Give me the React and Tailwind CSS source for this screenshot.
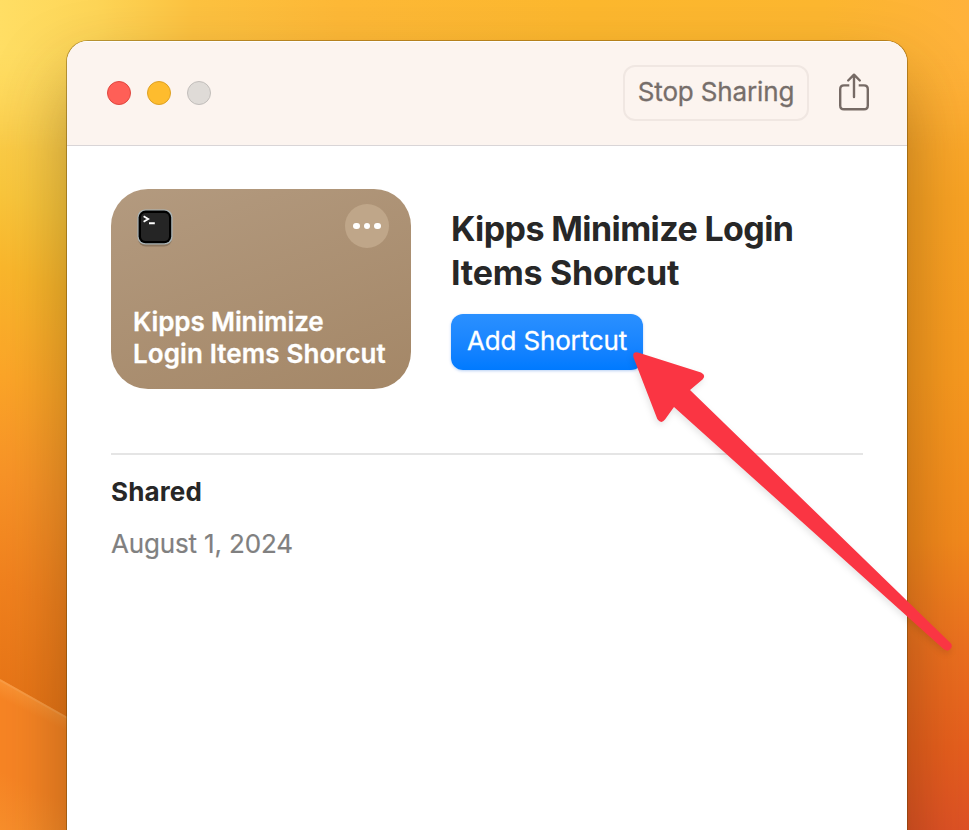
function Wallpaper() {
  return (
    <svg className="col-start-1 row-start-1 h-[830px] w-[969px]" viewBox="0 0 969 830" aria-hidden="true">
      <defs>
        <linearGradient id="left" x1="0" y1="0" x2="-286" y2="715" gradientUnits="userSpaceOnUse">
          <stop offset="0" stopColor="#ffde64" />
          <stop offset="0.12" stopColor="#fdd150" />
          <stop offset="0.23" stopColor="#fac73c" />
          <stop offset="0.32" stopColor="#fbb82c" />
          <stop offset="0.45" stopColor="#fda628" />
          <stop offset="0.57" stopColor="#f99427" />
          <stop offset="0.7" stopColor="#f2821e" />
          <stop offset="0.83" stopColor="#e97617" />
          <stop offset="1" stopColor="#e97617" />
        </linearGradient>
        <linearGradient id="right" x1="0" y1="0" x2="0" y2="1">
          <stop offset="0" stopColor="#ffb639" />
          <stop offset="0.1" stopColor="#feae31" />
          <stop offset="0.24" stopColor="#f9a324" />
          <stop offset="0.45" stopColor="#f89a1f" />
          <stop offset="0.65" stopColor="#f48a1c" />
          <stop offset="0.78" stopColor="#ec701f" />
          <stop offset="0.9" stopColor="#e75f1d" />
          <stop offset="1" stopColor="#df5225" />
        </linearGradient>
        <linearGradient id="top" x1="0" y1="0" x2="969" y2="0" gradientUnits="userSpaceOnUse">
          <stop offset="0" stopColor="#ffde64" />
          <stop offset="0.1" stopColor="#fed557" />
          <stop offset="0.16" stopColor="#fdca49" />
          <stop offset="0.2" stopColor="#fdc240" />
          <stop offset="0.35" stopColor="#feb937" />
          <stop offset="0.6" stopColor="#fdb82e" />
          <stop offset="0.85" stopColor="#fdb730" />
          <stop offset="1" stopColor="#ffb23b" />
        </linearGradient>
        <linearGradient id="fade" x1="0" y1="0" x2="0" y2="150" gradientUnits="userSpaceOnUse">
          <stop offset="0" stopColor="#fff" />
          <stop offset="0.3" stopColor="#fff" />
          <stop offset="1" stopColor="#000" />
        </linearGradient>
        <mask id="topMask">
          <rect width="969" height="150" fill="url(#fade)" />
        </mask>
        <linearGradient id="fold" x1="0" y1="680" x2="-60" y2="800" gradientUnits="userSpaceOnUse">
          <stop offset="0" stopColor="#fb9434" />
          <stop offset="0.12" stopColor="#f88524" />
          <stop offset="0.6" stopColor="#f88524" />
          <stop offset="1" stopColor="#f98f2b" />
        </linearGradient>
      </defs>
      <rect width="485" height="830" fill="url(#left)" />
      <rect x="484" width="485" height="830" fill="url(#right)" />
      <rect width="969" height="150" fill="url(#top)" mask="url(#topMask)" />
      <path d="M0 679 L110 741 V830 H0 Z" fill="url(#fold)" />
      <path d="M0 680 L110 742" stroke="#fba04b" strokeWidth="2" opacity="0.7" />
    </svg>
  );
}

function ShareIcon() {
  return (
    <svg className="mb-0.5 ml-[28px] h-[40px] w-[33px]" viewBox="0 0 33 40" fill="none" stroke="#766a65" strokeWidth="2.4" strokeLinecap="round" strokeLinejoin="round" aria-label="Share">
      <path strokeLinecap="butt" d="M12.3 13.4 H7 Q3.2 13.4 3.2 17.2 V33.4 Q3.2 37.2 7 37.2 H27 Q30.8 37.2 30.8 33.4 V17.2 Q30.8 13.4 27 13.4 H21.7" />
      <path d="M17 25 V3.2 M11.2 8.5 L17 2.7 L22.8 8.5" />
    </svg>
  );
}

function TitleBar() {
  return (
    <header className="flex h-[105px] items-center border-b border-[#d9d5d7] bg-[#fcf4ef] pr-[37px] pl-10 shadow-[inset_0_1px_0_#ffffff]">
      <div className="flex gap-4">
        <span className="size-6 rounded-full border border-[#e0473f] bg-[#ff5f57]" />
        <span className="size-6 rounded-full border border-[#dea123] bg-[#febc2e]" />
        <span className="size-6 rounded-full border border-[#c2bebb] bg-[#dfdbd7]" />
      </div>
      <button className="ml-auto flex h-14 w-[186px] items-center justify-center rounded-xl border-2 border-[#f0e7e2] pb-1 text-[26px] tracking-[-0.15px] whitespace-nowrap text-[#766e6a] [-webkit-text-stroke:0.3px_#766e6a]">
        Stop Sharing
      </button>
      <ShareIcon />
    </header>
  );
}

function TerminalIcon() {
  return (
    <svg className="mt-[3px] h-[40px] w-[38px] overflow-visible" viewBox="0 0 38 40" aria-hidden="true">
      <rect x="2" y="4" width="34" height="34.5" rx="8" fill="#5b4936" opacity="0.4" />
      <rect x="1.4" y="1.4" width="35.2" height="35.2" rx="8" fill="#a9b3b5" />
      <rect x="2.6" y="2.6" width="32.6" height="32.6" rx="7" fill="#000" />
      <rect x="5" y="5" width="28" height="28" rx="4.5" fill="#252525" />
      <path d="M7.6 8.3 L12.2 11 L7.6 13.7" fill="none" stroke="#fff" strokeWidth="1.8" />
      <path d="M13 15.2 H18.8" stroke="#fff" strokeWidth="2" />
    </svg>
  );
}

function ShortcutCard() {
  return (
    <section className="flex h-[200px] w-[300px] flex-col rounded-[37px] bg-linear-160 from-[#b39a7f] to-[#a48767] pt-[15px] pr-[22px] pl-[22px]">
      <div className="flex h-[44px] items-center justify-between pl-[3px]">
        <TerminalIcon />
        <span className="flex size-11 items-center justify-center gap-[3.8px] rounded-full bg-[#bfa689]">
          <i className="size-[6.6px] rounded-full bg-white" />
          <i className="size-[6.6px] rounded-full bg-white" />
          <i className="size-[6.6px] rounded-full bg-white" />
        </span>
      </div>
      <h2 className="mt-[58px] text-[26px] leading-8 font-semibold whitespace-nowrap text-white [-webkit-text-stroke:0.3px_white]">
        <span className="block tracking-[-0.1px]">Kipps Minimize</span>
        <span className="block tracking-[0.1px]">Login Items Shorcut</span>
      </h2>
    </section>
  );
}

function Arrow() {
  return (
    <svg className="z-10 col-start-1 row-start-1 h-[830px] w-[969px] drop-shadow-[-1px_3px_3px_rgba(0,0,0,0.1)]" viewBox="0 0 969 830" aria-hidden="true">
      <path
        d="M638 352.4 L701 372.4 Q706.5 375 702.5 379.5 L690 390 L951 643.5 Q953 646.5 950 649.5 Q947 651.5 943.5 649 L674 407 L665 419.5 Q661 424.5 657.3 419 L633.5 357.5 Q632 351.3 638 352.4 Z"
        fill="#fa3543"
      />
    </svg>
  );
}

export default function App() {
  return (
    <div className="grid h-[830px] w-[969px] overflow-hidden bg-[#fbb82c] font-['Inter','Liberation_Sans',sans-serif]">
      <Wallpaper />
      <main className="z-[1] col-start-1 row-start-1 mt-[41px] ml-[67px] h-[900px] w-[840px] overflow-hidden rounded-[21px] bg-white shadow-[0_0_0_1px_rgba(90,60,0,0.4),0_36px_72px_rgba(60,35,0,0.38)]">
        <TitleBar />
        <div className="px-11 pt-[43px]">
          <div className="flex gap-10">
            <ShortcutCard />
            <section className="flex flex-col items-start pt-[18px]">
              <h1 className="text-[34px] leading-11 font-bold whitespace-nowrap text-[#272727]">
                <span className="block tracking-[-0.6px]">Kipps Minimize Login</span>
                <span className="block tracking-[-0.25px]">Items Shorcut</span>
              </h1>
              <button className="mt-[19px] flex h-14 w-48 items-center justify-center rounded-xl bg-linear-to-b from-[#2a90ff] to-[#007aff] pb-1 text-[26px] tracking-[-0.15px] whitespace-nowrap text-white shadow-[0_1px_3px_rgba(0,90,220,0.28)] [-webkit-text-stroke:0.3px_white]">
                Add Shortcut
              </button>
            </section>
          </div>
          <section className="mt-16 border-t-2 border-[#e5e5e5] pt-[21px]">
            <h3 className="text-[26px] leading-8 font-bold tracking-[0.15px] text-[#272727]">Shared</h3>
            <p className="mt-5 text-[26px] leading-8 tracking-[-0.15px] text-[#808080] [-webkit-text-stroke:0.2px_#808080]">August 1, 2024</p>
          </section>
        </div>
      </main>
      <Arrow />
    </div>
  );
}
